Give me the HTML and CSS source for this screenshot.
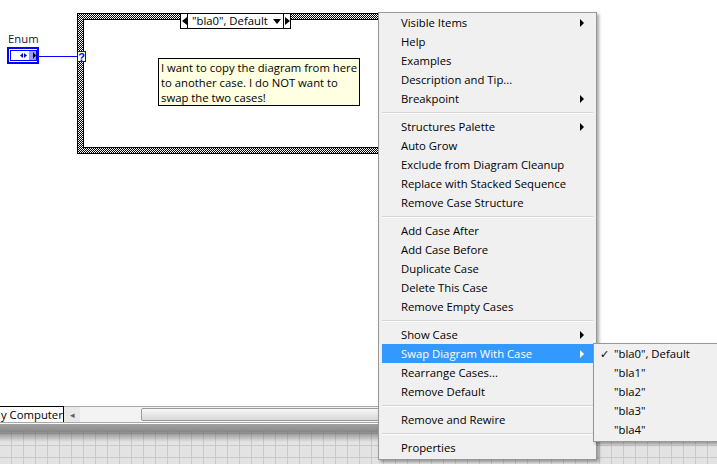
FILE: index.html
```html
<!DOCTYPE html>
<html>
<head>
<meta charset="utf-8">
<link rel="stylesheet" href="styles.css">
</head>
<body>
<div class="screen">
  <div class="diagram">
    <div class="enum-label">Enum</div>
    <svg class="enum-ctrl" width="32" height="17" viewBox="0 0 32 17">
      <rect x="0" y="0" width="32" height="17" fill="#0000ff"/>
      <rect x="2" y="2" width="28" height="13" fill="#ffffff"/>
      <rect x="3.5" y="3.5" width="26" height="10" fill="#ffffff" stroke="#0000ff"/>
      <rect x="22" y="4" width="7" height="9" fill="#9a9aff"/>
      <polygon points="26,5 29,8.5 26,12" fill="#000"/>
      <polygon points="16,6 13,8.5 16,11" fill="#0000c0"/>
      <polygon points="17,6 20,8.5 17,11" fill="#0000c0"/>
    </svg>
    <div class="wire"></div>
    <div class="case"><div class="case-inner"></div></div>
    <div class="terminal">?</div>
    <div class="selector">
      <span class="sel-btn sel-left"><svg width="5" height="8" viewBox="0 0 5 8"><polygon points="5,0 0,4 5,8" fill="#000"/></svg></span>
      <span class="sel-text">"bla0", Default</span>
      <svg class="sel-down" width="8" height="5" viewBox="0 0 8 5"><polygon points="0,0 8,0 4,5" fill="#000"/></svg>
      <span class="sel-btn sel-right"><svg width="5" height="8" viewBox="0 0 5 8"><polygon points="0,0 5,4 0,8" fill="#000"/></svg></span>
    </div>
    <div class="comment">I want to copy the diagram from here<br>to another case. I do NOT want to<br>swap the two cases!</div>
  </div>
  <div class="statusbar">
    <div class="tab">y Computer</div>
    <div class="scroll-arrow">◂</div>
    <div class="scroll-track"><div class="thumb"></div></div>
  </div>
  <div class="band"></div>
  <div class="grid"></div>

  <div class="menu">
    <div class="item sub">Visible Items</div>
    <div class="item">Help</div>
    <div class="item">Examples</div>
    <div class="item">Description and Tip...</div>
    <div class="item sub">Breakpoint</div>
    <div class="sep"></div>
    <div class="item sub">Structures Palette</div>
    <div class="item">Auto Grow</div>
    <div class="item">Exclude from Diagram Cleanup</div>
    <div class="item">Replace with Stacked Sequence</div>
    <div class="item">Remove Case Structure</div>
    <div class="sep"></div>
    <div class="item">Add Case After</div>
    <div class="item">Add Case Before</div>
    <div class="item">Duplicate Case</div>
    <div class="item">Delete This Case</div>
    <div class="item">Remove Empty Cases</div>
    <div class="sep"></div>
    <div class="item sub">Show Case</div>
    <div class="item sub active">Swap Diagram With Case</div>
    <div class="item">Rearrange Cases...</div>
    <div class="item">Remove Default</div>
    <div class="sep"></div>
    <div class="item">Remove and Rewire</div>
    <div class="sep"></div>
    <div class="item">Properties</div>
  </div>

  <div class="submenu">
    <div class="sitem"><span class="check">✓</span>"bla0", Default</div>
    <div class="sitem"><span class="check"></span>"bla1"</div>
    <div class="sitem"><span class="check"></span>"bla2"</div>
    <div class="sitem"><span class="check"></span>"bla3"</div>
    <div class="sitem"><span class="check"></span>"bla4"</div>
  </div>
</div>
</body>
</html>
```

FILE: styles.css
```css
* { box-sizing: border-box; }
html, body { margin: 0; padding: 0; }
body {
  width: 717px;
  height: 464px;
  overflow: hidden;
  font-family: "Open Sans", "Liberation Sans", sans-serif;
  font-size: 11.3px;
  color: #000;
  background: #fff;
}
.screen {
  position: relative;
  width: 717px;
  height: 464px;
  overflow: hidden;
  display: flex;
  flex-direction: column;
}

/* ---------- block diagram canvas ---------- */
.diagram {
  position: relative;
  height: 406px;
  flex: none;
  background: #fff;
}
.enum-label {
  position: absolute;
  left: 8px;
  top: 31px;
  line-height: 15px;
  color: #1a1a1a;
}
.enum-ctrl {
  position: absolute;
  left: 7px;
  top: 47px;
  display: block;
}
.wire {
  position: absolute;
  left: 39px;
  top: 56px;
  width: 39px;
  height: 1px;
  background: #0000ff;
}
.case {
  position: absolute;
  left: 77px;
  top: 13px;
  width: 340px;
  height: 141px;
  border: 1px solid #000;
  padding: 5px;
  background: repeating-conic-gradient(#000 0 25%, #fff 0 50%) 0 0 / 2px 2px;
}
.case-inner {
  width: 100%;
  height: 100%;
  background: #fff;
  border: 1px solid #000;
}
.terminal {
  position: absolute;
  z-index: 2;
  left: 77px;
  top: 51px;
  width: 9px;
  height: 11px;
  border: 1px solid #0000ff;
  background: #fff;
  color: #0000ff;
  font-family: "Liberation Sans", sans-serif;
  font-size: 11px;
  font-weight: bold;
  line-height: 10px;
  text-align: center;
}
.selector {
  position: absolute;
  left: 180px;
  top: 13px;
  width: 111px;
  height: 16px;
  border: 1px solid #000;
  background: #fff;
  display: flex;
  align-items: stretch;
}
.sel-btn {
  width: 7px;
  flex: none;
  display: flex;
  align-items: center;
  justify-content: center;
}
.sel-left { border-right: 1px solid #000; }
.sel-right { border-left: 1px solid #000; }
.sel-text {
  flex: 1;
  padding-left: 4px;
  line-height: 14px;
  white-space: nowrap;
}
.sel-down {
  align-self: center;
  margin-right: 2px;
}
.comment {
  position: absolute;
  left: 158px;
  top: 58px;
  width: 202px;
  height: 48px;
  border: 1px solid #000;
  background: #ffffe1;
  padding: 1px 2px;
  line-height: 15px;
  white-space: nowrap;
}

/* ---------- bottom status / scroll area ---------- */
.statusbar {
  height: 16px;
  flex: none;
  display: flex;
  align-items: stretch;
  background: #f0f0f0;
}
.tab {
  width: 64px;
  flex: none;
  background: #fdfdfd;
  border-top: 1px solid #000;
  border-right: 1px solid #000;
  line-height: 15px;
  font-size: 11.3px;
  padding-left: 1px;
  white-space: nowrap;
}
.scroll-arrow {
  width: 16px;
  flex: none;
  font-size: 9px;
  line-height: 15px;
  color: #606060;
  text-align: center;
  background: #e9e9e9;
  border-top: 1px solid #a8a8a8;
}
.scroll-track {
  flex: 1;
  padding: 1px 0 1px 61px;
  background: #f3f3f3;
  border-top: 1px solid #a8a8a8;
}
.thumb {
  height: 100%;
  border: 1px solid #9a9a9a;
  border-radius: 2px;
  background: linear-gradient(#f8f8f8, #e8e8e8 50%, #d8d8d8);
}
.band {
  height: 9px;
  flex: none;
  background: linear-gradient(#a8a8a8 0 1px, #fafafa 1px 2px, #a2a2a2 2px, #8c8c8c);
}
.grid {
  flex: 1;
  background:
    linear-gradient(rgba(70,70,70,.6), rgba(230,230,230,0) 11px),
    linear-gradient(90deg, #c9c9c9 1px, transparent 1px) -1px 0 / 12px 12px,
    linear-gradient(#c9c9c9 1px, transparent 1px) 0 2px / 12px 12px,
    #e3e3e3;
}

/* ---------- context menu ---------- */
.menu {
  position: absolute;
  left: 378px;
  top: 12px;
  width: 219px;
  background: #f0f0f0;
  border: 1px solid #979797;
  padding: 0 3px 2px 3px;
  box-shadow: 2px 2px 3px rgba(0,0,0,.35);
}
.item {
  position: relative;
  height: 19px;
  line-height: 19px;
  padding-left: 19px;
  white-space: nowrap;
}
.item.sub::after {
  content: "";
  position: absolute;
  right: 9px;
  top: 6px;
  border-left: 4px solid #000;
  border-top: 4px solid transparent;
  border-bottom: 4px solid transparent;
}
.item.active {
  background: #3399ff;
  color: #fff;
}
.item.active::after { border-left-color: #fff; }
.sep {
  height: 9px;
  padding-top: 4px;
}
.sep::before {
  content: "";
  display: block;
  border-top: 1px solid #d4d4d4;
  border-bottom: 1px solid #fff;
}
.submenu {
  position: absolute;
  left: 593px;
  top: 343px;
  width: 126px;
  background: #f0f0f0;
  border: 1px solid #979797;
  padding: 0 2px 2px 2px;
  box-shadow: 2px 2px 3px rgba(0,0,0,.35);
}
.sitem {
  height: 19px;
  line-height: 19px;
  white-space: nowrap;
  display: flex;
}
.check {
  width: 18px;
  flex: none;
  padding-left: 4px;
  font-size: 11px;
}
```
